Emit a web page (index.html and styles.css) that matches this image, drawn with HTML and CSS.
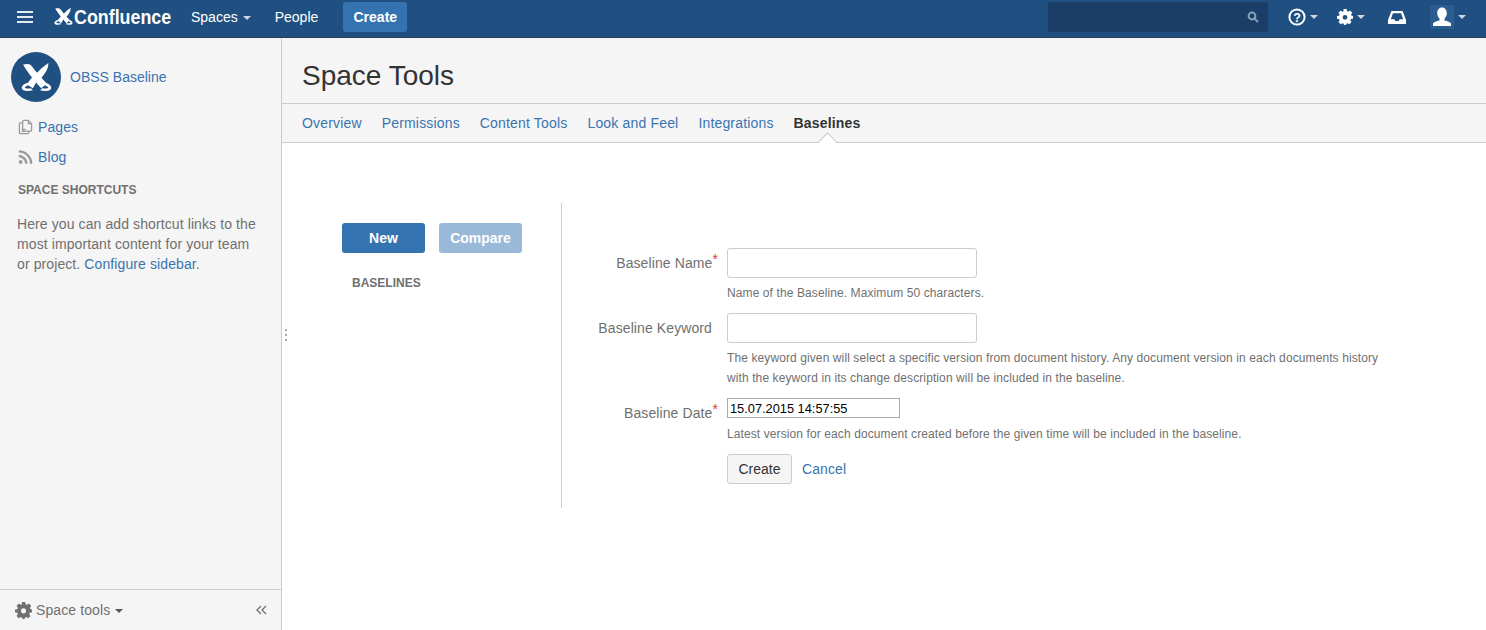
FILE: index.html
```html
<!DOCTYPE html>
<html lang="en">
<head>
<meta charset="utf-8">
<title>Space Tools - Baselines</title>
<link rel="stylesheet" href="styles.css">
</head>
<body>
<svg class="defs" width="0" height="0" aria-hidden="true">
  <symbol id="cf-mark" viewBox="0 0 30 30">
    <path d="M2 2.500 C6.500 1.500 9 2 10.500 4 C13.500 8.500 19.500 14.500 25 21 L19.500 25.500 C15 20 6.500 11 2 2.500 Z"/>
    <path d="M26.500 1 C26.500 7 23 11.500 19.500 15.500 L15 11 C18 7.500 22 4 26.500 1 Z"/>
    <path d="M11 14.500 L15 19 L11.500 25.500 L5.500 21.500 Z"/>
    <path d="M6.500 20 C2.500 21.300 .3 23.200 .8 25.500 C1.300 28 6 28.800 11.500 27.300 L9.500 25.300 C6.500 25.900 4 25.600 3.800 24.900 C3.600 24.200 5 23.300 7.500 22.300 Z"/>
    <path d="M23.500 20 C27.500 21.300 29.700 23.200 29.200 25.500 C28.700 28 24 28.800 18.500 27.300 L20.500 25.300 C23.500 25.900 26 25.600 26.200 24.900 C26.400 24.200 25 23.300 22.500 22.300 Z"/>
  </symbol>
  <symbol id="gear" viewBox="0 0 20 20">
    <path fill-rule="evenodd" d="M8 0h4l.5 2.600 1.600.7 2.200-1.500 2.800 2.800-1.500 2.200.7 1.600L20 8.900v3.200l-2.600.5-.7 1.600 1.500 2.200-2.800 2.800-2.200-1.500-1.600.7L11.100 21H8.900l-.5-2.600-1.600-.7-2.200 1.500-2.800-2.800 1.500-2.200-.7-1.600L0 12.100V8.900l2.600-.5.700-1.600-1.500-2.200 2.800-2.800 2.200 1.500 1.600-.7zM10 7.400a3 3 0 1 0 0 6 3 3 0 0 0 0-6z"/>
  </symbol>
</svg>

<header class="topbar">
  <button class="burger" type="button" aria-label="Menu"><span></span><span></span><span></span></button>
  <a class="brand" href="#"><svg class="brand-mark"><use href="#cf-mark"/></svg><span class="brand-name">Confluence</span></a>
  <nav class="topnav">
    <a href="#" class="topnav-link has-caret">Spaces</a>
    <a href="#" class="topnav-link">People</a>
    <a href="#" class="create-btn">Create</a>
  </nav>
  <div class="topbar-right">
    <div class="search">
      <svg class="search-icon" viewBox="0 0 12 12"><circle cx="5" cy="5" r="3.400"/><path d="M7.600 7.600 11 11"/></svg>
    </div>
    <a href="#" class="tool-link tool-help has-caret" aria-label="Help">
      <svg class="tool-icon" viewBox="0 0 18 18"><circle class="help-ring" cx="9" cy="9" r="7.600"/><text class="help-q" x="9" y="13.500" text-anchor="middle">?</text></svg>
    </a>
    <a href="#" class="tool-link tool-gear has-caret" aria-label="Settings"><svg class="tool-icon"><use href="#gear"/></svg></a>
    <a href="#" class="tool-link inbox" aria-label="Notifications">
      <svg class="tool-icon" viewBox="0 0 18 13"><path fill-rule="evenodd" d="M3.400 0h11.200L18 9v4H0V9zM5 2.200 2.800 8.200h3.600l.9 1.800h3.400l.9-1.800h3.600L13 2.200z"/></svg>
    </a>
    <a href="#" class="tool-link has-caret user" aria-label="User">
      <span class="avatar-box"><svg viewBox="0 0 24 24"><path d="M12 2.500c3 0 4.800 2.500 4.800 5.600 0 2.400-1 4.400-2.300 5.600v1.700c2.800.7 5.800 1.700 6.500 3V21H3v-2.600c.7-1.300 3.700-2.300 6.500-3v-1.700C8.200 12.500 7.200 10.500 7.200 8.100c0-3.100 1.800-5.600 4.800-5.600z"/></svg></span>
    </a>
  </div>
</header>

<div class="layout">
  <aside class="sidebar">
    <div class="sidebar-top">
      <a href="#" class="space-id">
        <span class="space-logo"><svg><use href="#cf-mark"/></svg></span>
        <span class="space-name">OBSS Baseline</span>
      </a>
      <ul class="side-links">
        <li><svg class="side-icon" viewBox="0 0 16 16"><path class="outline" d="M5 3.500H2.500a1 1 0 0 0-1 1V14a1 1 0 0 0 1 1h8a1 1 0 0 0 1-1v-1.500M5 3.500V2a1 1 0 0 1 1-1h5l3.500 3.500V11.500a1 1 0 0 1-1 1H6a1 1 0 0 1-1-1zM11 1v3.500h3.500M3.800 10.500H8M3.800 12.800H8"/></svg><a href="#">Pages</a></li>
        <li><svg class="side-icon rss" viewBox="0 0 16 16"><circle cx="2.800" cy="13.200" r="2"/><path class="outline thick" d="M.8 7a8.200 8.200 0 0 1 8.200 8.200M.8 2A13.200 13.200 0 0 1 14 15.200"/></svg><a href="#">Blog</a></li>
      </ul>
      <h2 class="side-heading">SPACE SHORTCUTS</h2>
      <p class="side-text">Here you can add shortcut links to the most important content for your team or project. <a href="#">Configure sidebar</a>.</p>
    </div>
    <div class="side-foot">
      <a href="#" class="space-tools"><svg class="foot-gear"><use href="#gear"/></svg><span>Space tools</span><i class="caret-dark"></i></a>
      <svg class="collapse" viewBox="0 0 12 10"><path d="M5.500 1 1.500 5l4 4M10.500 1l-4 4 4 4"/></svg>
    </div>
    <div class="grip"><i></i><i></i><i></i></div>
  </aside>

  <main class="main">
    <div class="page-head">
      <h1>Space Tools</h1>
    </div>
    <nav class="tabs">
      <a href="#">Overview</a>
      <a href="#">Permissions</a>
      <a href="#">Content Tools</a>
      <a href="#">Look and Feel</a>
      <a href="#">Integrations</a>
      <a href="#" class="tab-active">Baselines</a>
    </nav>
    <section class="workspace">
      <div class="list-panel">
        <div class="list-actions">
          <button type="button" class="btn-primary">New</button>
          <button type="button" class="btn-primary btn-disabled">Compare</button>
        </div>
        <h3 class="list-title">BASELINES</h3>
      </div>
      <form class="form-panel">
        <div class="row">
          <label class="row-label">Baseline Name<sup>*</sup></label>
          <div class="row-field">
            <input class="text-input" type="text">
            <p class="help">Name of the Baseline. Maximum 50 characters.</p>
          </div>
        </div>
        <div class="row">
          <label class="row-label">Baseline Keyword</label>
          <div class="row-field">
            <input class="text-input" type="text">
            <p class="help">The keyword given will select a specific version from document history. Any document version in each documents history with the keyword in its change description will be included in the baseline.</p>
          </div>
        </div>
        <div class="row row-date">
          <label class="row-label">Baseline Date<sup>*</sup></label>
          <div class="row-field">
            <input class="date-input" type="text" value="15.07.2015 14:57:55">
            <p class="help">Latest version for each document created before the given time will be included in the baseline.</p>
          </div>
        </div>
        <div class="actions">
          <button type="button" class="btn-default">Create</button>
          <a href="#">Cancel</a>
        </div>
      </form>
    </section>
  </main>
</div>
</body>
</html>
```
FILE: styles.css
```css
* { box-sizing: border-box; }
html, body { height: 100%; }
body {
  margin: 0;
  overflow: hidden;
  display: flex;
  flex-direction: column;
  font-family: "Liberation Sans", Arial, sans-serif;
  font-size: 14px;
  line-height: 20px;
  letter-spacing: .1px;
  color: #333;
  background: #fff;
}
a { color: #3b73af; text-decoration: none; }
.defs { position: absolute; }

/* top bar */
.topbar {
  flex: none;
  height: 38px;
  display: flex;
  align-items: flex-start;
  background: #205081;
  border-bottom: 1px solid #2e3d54;
  color: #fff;
}
.burger {
  width: 16px;
  height: 12px;
  margin: 11px 0 0 17px;
  padding: 0;
  border: 0;
  background: none;
  display: flex;
  flex-direction: column;
  justify-content: space-between;
}
.burger span { display: block; height: 2px; background: #e4ebf3; }
.brand {
  margin: 6px 0 0 20px;
  height: 21px;
  display: flex;
  align-items: center;
  color: #fff;
}
.brand-mark { width: 21px; height: 19px; fill: #fff; }
.brand-name {
  display: inline-block;
  font-weight: 700;
  font-size: 21px;
  line-height: 21px;
  letter-spacing: 0;
  width: 97px;
  white-space: nowrap;
  transform: scaleX(.85);
  transform-origin: left center;
}
.topnav {
  display: flex;
  align-items: center;
  height: 34px;
  margin-left: 20px;
}
.topnav-link { color: #fff; margin-right: 24px; line-height: 30px; letter-spacing: 0; }
.has-caret::after {
  content: "";
  display: inline-block;
  margin-left: 5px;
  vertical-align: 2px;
  border: 4px solid transparent;
  border-top-color: #ccd7e3;
  border-bottom-width: 0;
}
.create-btn {
  width: 64px;
  height: 30px;
  margin-left: 1px;
  background: #3572b0;
  border-radius: 3px;
  color: #fff;
  font-weight: 700;
  letter-spacing: 0;
  text-align: center;
  line-height: 30px;
}
.topbar-right {
  margin-left: auto;
  display: flex;
  align-items: flex-start;
  padding-right: 20px;
}
.search {
  width: 220px;
  height: 30px;
  margin-top: 2px;
  background: #1a3e67;
  border-radius: 3px;
  display: flex;
  align-items: center;
  justify-content: flex-end;
  padding-right: 9px;
}
.search-icon { width: 12px; height: 12px; fill: none; stroke: #8aa1bb; stroke-width: 2; }
.tool-link { display: flex; align-items: center; height: 34px; color: #fff; }
.tool-link.has-caret::after { margin-left: 4px; vertical-align: 0; }
.tool-icon { width: 18px; height: 18px; fill: #fff; display: block; }
.tool-help { margin-left: 20px; }
.tool-gear { margin-left: 19px; }
.tool-gear .tool-icon { width: 16px; height: 16px; }
.tool-link.inbox { margin-left: 23px; }
.tool-link.inbox .tool-icon { height: 13px; }
.tool-link.user { margin-left: 24px; }
.help-ring { fill: none; stroke: #fff; stroke-width: 2; }
.help-q { font-family: "Liberation Sans", sans-serif; font-size: 12.500px; font-weight: 700; fill: #fff; }
.avatar-box {
  width: 24px;
  height: 24px;
  background: #2d5d90;
  border-radius: 2px;
  display: block;
}
.avatar-box svg { width: 24px; height: 24px; display: block; fill: #fff; }

/* layout */
.layout { flex: 1; min-height: 0; display: flex; }

/* sidebar */
.sidebar {
  position: relative;
  flex: none;
  width: 282px;
  display: flex;
  flex-direction: column;
  background: #f5f5f5;
  border-right: 1px solid #ccc;
}
.sidebar-top { flex: 1; padding: 14px 20px 0 11px; }
.space-id { display: flex; align-items: center; gap: 9px; height: 50px; }
.space-name { letter-spacing: 0; }
.space-logo {
  width: 50px;
  height: 50px;
  border-radius: 50%;
  background: #205081;
  display: flex;
  align-items: center;
  justify-content: center;
}
.space-logo svg { width: 31px; height: 31px; fill: #fff; }
.side-links { list-style: none; margin: 0; padding: 0 0 0 7px; }
.side-links li { display: flex; align-items: center; height: 30px; gap: 5px; }
.side-links li:first-child { margin-top: 10px; }
.side-icon { width: 15px; height: 16px; fill: #999; flex: none; }
.outline { fill: none; stroke: #999; stroke-width: 1.300; }
.outline.thick { stroke-width: 2.600; }
.side-heading {
  margin: 8px 0 0 7px;
  font-size: 12px;
  line-height: 20px;
  font-weight: 700;
  color: #707070;
  letter-spacing: 0;
}
.side-text { margin: 14px 0 0 6px; color: #707070; }
.side-foot {
  flex: none;
  height: 41px;
  border-top: 1px solid #ccc;
  display: flex;
  align-items: center;
  justify-content: space-between;
  padding: 0 13px 0 15px;
}
.space-tools { display: flex; align-items: center; color: #707070; }
.foot-gear { width: 17px; height: 17px; fill: #707070; margin-right: 4px; }
.caret-dark {
  margin-left: 5px;
  margin-top: 2px;
  border: 4px solid transparent;
  border-top-color: #555;
  border-bottom-width: 0;
}
.collapse { width: 13px; height: 10px; fill: none; stroke: #707070; stroke-width: 1.300; }
.grip {
  position: absolute;
  left: 285px;
  top: 291px;
  display: flex;
  flex-direction: column;
  gap: 3px;
}
.grip i { display: block; width: 2px; height: 2px; background: #aaa; }

/* main */
.main { flex: 1; min-width: 0; display: flex; flex-direction: column; }
.page-head {
  height: 66px;
  padding: 20px 20px 0;
  background: #f5f5f5;
  border-bottom: 1px solid #ccc;
}
.page-head h1 {
  margin: 0;
  font-size: 28px;
  line-height: 36px;
  font-weight: 400;
  letter-spacing: 0;
  color: #333;
}
.tabs {
  height: 39px;
  padding: 0 20px;
  display: flex;
  gap: 20px;
  align-items: center;
  background: #f5f5f5;
  border-bottom: 1px solid #ccc;
  letter-spacing: .17px;
}
.tab-active { position: relative; color: #333; font-weight: 700; }
.tab-active::after {
  content: "";
  position: absolute;
  left: 50%;
  bottom: -15px;
  width: 12px;
  height: 12px;
  margin-left: -6px;
  background: #fff;
  border: 1px solid #ccc;
  border-right: 0;
  border-bottom: 0;
  transform: rotate(45deg);
}
.workspace { flex: 1; display: flex; align-items: flex-start; padding-top: 60px; }
.list-panel { width: 279px; flex: none; padding: 20px 0 0 60px; }
.list-actions { display: flex; gap: 14px; }
.btn-primary {
  width: 83px;
  height: 30px;
  padding: 0;
  border: 0;
  border-radius: 3px;
  background: #3572b0;
  color: #fff;
  font: 700 14px/30px "Liberation Sans", Arial, sans-serif;
}
.btn-disabled { background: #9ab9d8; }
.list-title {
  margin: 20px 0 0 10px;
  font-size: 12px;
  line-height: 20px;
  font-weight: 700;
  color: #707070;
  letter-spacing: 0;
}
.form-panel {
  flex: none;
  width: 846px;
  height: 305px;
  border-left: 1px solid #ccc;
  padding-top: 45px;
}
.row { display: flex; margin-bottom: 10px; }
.row-label {
  width: 150px;
  text-align: right;
  color: #707070;
  line-height: 30px;
  white-space: nowrap;
}
.row-label sup {
  position: relative;
  top: -1px;
  color: #d04437;
  font-size: 14px;
  line-height: 0;
  vertical-align: 3px;
  margin-right: -6px;
}
.row-field { margin-left: 15px; flex: 1; }
.text-input {
  display: block;
  width: 250px;
  height: 30px;
  margin: 0;
  padding: 4px 6px;
  background: #fff;
  border: 1px solid #ccc;
  border-radius: 3px;
}
.date-input {
  display: block;
  width: 173px;
  height: 20px;
  margin: 0;
  padding: 1px 2px;
  border: 1px solid #a9a9a9;
  font: 12.800px/16px "Liberation Sans", Arial, sans-serif;
  color: #000;
  background: #fff;
}
.help {
  margin: 5px 0 0;
  width: 665px;
  font-size: 12px;
  line-height: 20px;
  color: #707070;
}
.row-date .help { margin-top: 6px; }
.actions { margin-left: 165px; display: flex; align-items: center; gap: 10px; }
.btn-default {
  width: 65px;
  height: 30px;
  padding: 0;
  background: #f5f5f5;
  border: 1px solid #ccc;
  border-radius: 3px;
  color: #333;
  font: 14px/28px "Liberation Sans", Arial, sans-serif;
}
```
